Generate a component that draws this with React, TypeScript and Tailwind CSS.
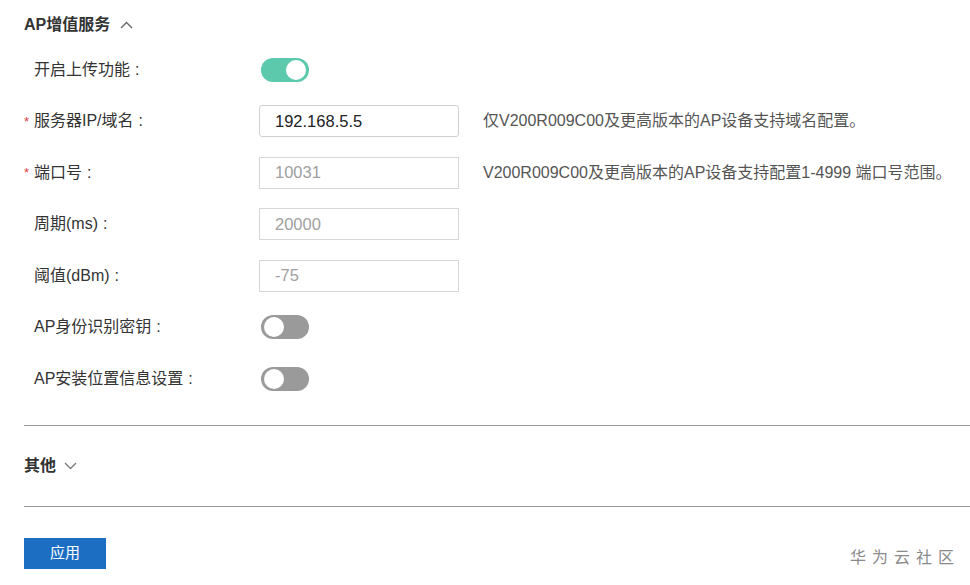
import React from 'react';

const font = { fontFamily: '"Liberation Sans", "Noto Sans CJK SC", sans-serif' };

function Toggle({ on }: { on: boolean }) {
  return (
    <div
      className={`relative h-[24px] w-[48px] rounded-full ${on ? 'bg-[#5cc8ac]' : 'bg-[#9a9a9a]'}`}
    >
      <div
        className={`absolute top-[2px] h-[20px] w-[20px] rounded-full bg-white ${on ? 'right-[3px]' : 'left-[3px]'}`}
      />
    </div>
  );
}

function Row({
  label,
  required,
  children,
  help,
}: {
  label: string;
  required?: boolean;
  children: React.ReactNode;
  help?: string;
}) {
  return (
    <div className="flex h-[51.5px] items-center">
      <div className="flex w-[235px] items-center text-[16px] text-[#333]">
        <span className="w-[10px] text-[13px] text-[#e03a3a]">{required ? '*' : ''}</span>
        <span>{label}</span>
        <span className="ml-[5px]">:</span>
      </div>
      {children}
      {help && <span className="ml-[24px] text-[16px] text-[#555]">{help}</span>}
    </div>
  );
}

function Input({ value, muted }: { value: string; muted?: boolean }) {
  return (
    <div
      className={`flex h-[32px] w-[200px] items-center border px-[15px] text-[16.5px] ${
        muted ? 'border-[#d6d6d6] text-[#a0a0a0]' : 'rounded-[3px] border-[#d0d0d0] text-[#222]'
      }`}
    >
      {value}
    </div>
  );
}

export default function App() {
  return (
    <div className="relative h-[585px] w-[970px] overflow-hidden bg-white" style={font}>
      <div className="flex h-[44px] items-center gap-[10px] pl-[24px] pt-[6px]">
        <span className="text-[16px] font-bold text-[#333]">AP增值服务</span>
        <svg width="13" height="8" viewBox="0 0 13 8" fill="none">
          <path d="M1 7L6.5 1.5L12 7" stroke="#666" strokeWidth="1.4" />
        </svg>
      </div>

      <div className="pl-[24px]">
        <Row label="开启上传功能">
          <div className="pl-[2px]">
            <Toggle on />
          </div>
        </Row>
        <Row label="服务器IP/域名" required help="仅V200R009C00及更高版本的AP设备支持域名配置。">
          <Input value="192.168.5.5" />
        </Row>
        <Row label="端口号" required help="V200R009C00及更高版本的AP设备支持配置1-4999 端口号范围。">
          <Input value="10031" muted />
        </Row>
        <Row label="周期(ms)">
          <Input value="20000" muted />
        </Row>
        <Row label="阈值(dBm)">
          <Input value="-75" muted />
        </Row>
        <Row label="AP身份识别密钥">
          <div className="pl-[2px]">
            <Toggle on={false} />
          </div>
        </Row>
        <Row label="AP安装位置信息设置">
          <div className="pl-[2px]">
            <Toggle on={false} />
          </div>
        </Row>
      </div>

      <div className="ml-[24px] mt-[20px] h-px bg-[#9a9a9a]" />

      <div className="flex h-[80px] items-center gap-[8px] pl-[24px]">
        <span className="text-[16px] font-bold text-[#333]">其他</span>
        <svg width="13" height="8" viewBox="0 0 13 8" fill="none">
          <path d="M1 1L6.5 6.5L12 1" stroke="#777" strokeWidth="1.3" />
        </svg>
      </div>

      <div className="ml-[24px] h-px bg-[#9a9a9a]" />

      <div className="pl-[24px] pt-[31px]">
        <button className="flex h-[31px] w-[82px] items-center justify-center bg-[#1b6ec2] text-[15px] text-white">
          应用
        </button>
      </div>

      <div className="absolute bottom-[15px] right-[10px] text-[16px] tracking-[6px] text-[#8a8a8a]">
        华为云社区
      </div>
    </div>
  );
}
